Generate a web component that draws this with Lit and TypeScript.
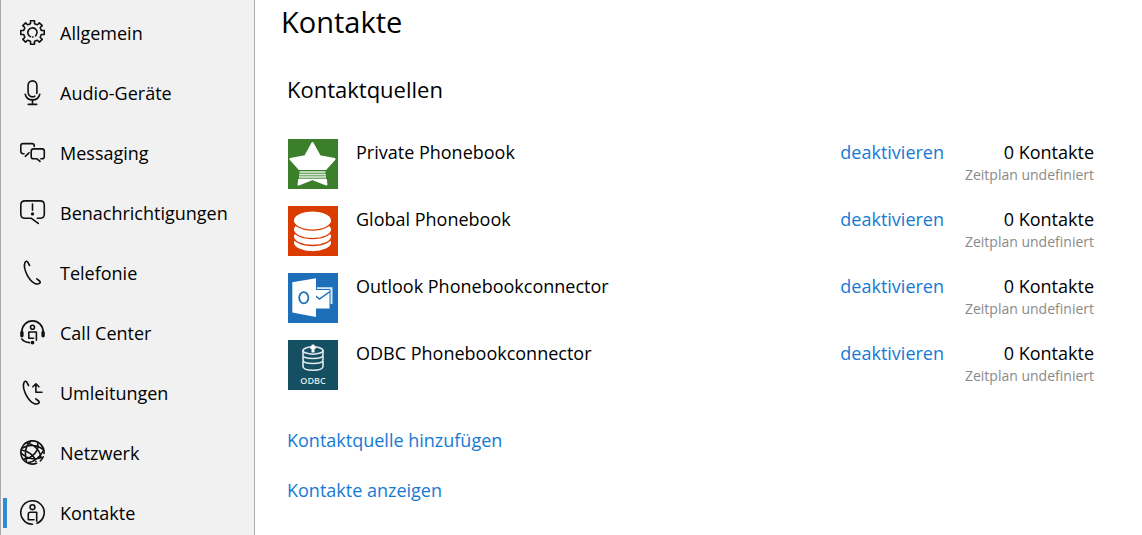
import { LitElement, html, svg, css } from "lit";
import { customElement, property } from "lit/decorators.js";

function gearPath(cx: number, cy: number): string {
  const points: string[] = [];
  const profile: [number, number][] = [
    [-9.5, 11.9],
    [9.5, 11.9],
    [12.5, 9.2],
    [18, 8.9],
    [27, 8.9],
    [32.5, 9.2],
  ];
  for (let tooth = 0; tooth < 8; tooth++) {
    for (const [angle, radius] of profile) {
      const a = ((tooth * 45 + angle - 90) * Math.PI) / 180;
      points.push(`${(cx + radius * Math.cos(a)).toFixed(2)} ${(cy + radius * Math.sin(a)).toFixed(2)}`);
    }
  }
  return `M${points.join("L")}Z`;
}

const person = svg`
  <circle cx="12.5" cy="7.2" r="2.4"/>
  <path d="M14 19.7H8.3V14.3Q8.3 12.3 10.3 12.3H16.7V21.3"/>`;

const navIcons: Record<string, unknown> = {
  gear: svg`
    <path d=${gearPath(12.5, 12.5)}/>
    <path d="M10.4 16.6A4.6 4.6 0 1 1 15.6 15.8M12.5 17H13"/>`,
  mic: svg`
    <path d="M16.9 13.5V5.3A4.4 4.4 0 0 0 8.1 5.3V12.3A4.4 4.4 0 0 0 14.8 16.2"/>
    <path d="M5.2 14.2C7 21.8 18 21.8 19.8 14.2M12.5 20V24.2M8.3 24.4H16.7"/>`,
  chat: svg`
    <path d="M14.2 6.4V5.6Q14.2 3.6 12 3.6H3Q.8 3.6 .8 5.8V11.3Q.8 13.6 3.2 13.8H4M5.3 16.3L9 12.8"/>
    <path d="M20 21.4L17 18.8H13.6Q11.2 18.8 11.2 16.4V11.2Q11.2 8.9 13.6 8.9H22Q24.3 8.9 24.3 11.2V16.4Q24.3 18.6 22 18.8H20.8"/>`,
  alert: svg`
    <path d="M18.3 23.4L11.4 18.3H5Q.8 18.3 .8 14V5Q.8 .9 5 .9H20Q24.3 .9 24.3 5V14Q24.3 18.3 20 18.3H17.3"/>
    <path d="M12.5 4V10.2"/><circle class="solid" cx="12.5" cy="13.9" r=".8"/>`,
  phone: svg`
    <path d="M9.6 5.5L7.6 1.8Q6.4 .4 5 2.4C2.8 8 8.4 21.4 16 23.9Q18.4 24.5 20.2 22.6Q20.6 21.9 19.6 21L16.8 18.8"/>`,
  headset: svg`
    <path d="M1.8 12C1.8 5.8 6.5 .9 12.5 .9S23.2 5.8 23.2 12"/>
    <path class="thick" d="M1.9 12.4V15.8M23.1 12.4V15.8"/>
    <path d="M1.8 19Q4.5 22.4 9.5 22.6"/><circle class="solid" cx="12.5" cy="22.6" r="1.1"/>
    <circle cx="12.5" cy="7.3" r="2"/><path d="M13.5 18.3H8.8V12H16.4V20.3"/>`,
  forward: svg`
    <path d="M8.6 5.5L6.6 1.8Q5.4 .4 4 2.4C1.8 8 7.4 21.4 15 23.9Q17.4 24.5 19.2 22.6Q19.6 21.9 18.6 21L15.8 18.8"/>
    <path d="M12.9 6.8L15.9 3.8L18.9 6.8M15.9 4V12.3H22"/>`,
  globe: svg`
    <path d="M16.5 23.3A11.6 11.6 0 1 1 24 13.5M23.2 16.8Q22.2 19.2 20.3 21"/>
    <path d="M7.2 3.2C13.5 4 20.3 10.5 20.8 17.5M2.6 8C8.5 4.2 17 4.6 22.8 9.2M10.7 1.2C5.5 6 4.2 13 6.5 21.5M17.5 2.2C19.8 9.5 13.5 18.2 4 19M1.4 13.2C7 19 15 19.8 21.6 17.6M2 10.2C8 10.4 14.5 15.8 16 21.5M23.4 10.8C19 18 13.5 21.8 8.5 22.6"/>`,
  contact: svg`
    <path d="M12.5 24.2A11.7 11.7 0 1 1 17 23.3"/>${person}`,
};

const tiles: Record<string, unknown> = {
  star: svg`
    <rect width="50" height="50" fill="#3b7f2b"/>
    <path d="M24.5 4L31.8 17.2L46.6 20L37 30.8L38.4 45.6L24.5 40L10.6 45.6L12 30.8L2.4 20L17.2 17.2Z"
      fill="#fff" stroke="#fff" stroke-width="2" stroke-linejoin="round"/>
    <path d="M10 31H39V40H10Z" fill="#3b7f2b"/>
    <path d="M11.5 33.2H37.5M11 38.2H38" stroke="#bcd6b7" stroke-width="2.6"/>
    <path d="M11 35.8H38" stroke="#fff" stroke-width="1.2"/>`,
  database: svg`
    <rect width="50" height="50" fill="#da3b01"/>
    <g fill="#fff" stroke="#da3b01" stroke-width="1.3">
      <ellipse cx="24.5" cy="36.8" rx="19.2" ry="9"/>
      <ellipse cx="24.5" cy="30.5" rx="19.2" ry="9"/>
      <ellipse cx="24.5" cy="23.6" rx="19.2" ry="9"/>
      <ellipse cx="24.5" cy="14.5" rx="19.2" ry="9.6"/>
    </g>`,
  outlook: svg`
    <rect width="50" height="50" fill="#1e6fb9"/>
    <path d="M29 14.2H44.5V31H29Z" fill="#d9e8f5"/>
    <path d="M27 16.5H42V36H27Z" fill="#fff" stroke="#1e6fb9"/>
    <path d="M27 22.5L31.5 26L42 18.5" fill="none" stroke="#1e6fb9" stroke-width="1.5"/>
    <path d="M4.3 9.2L28 5.2V44L4.3 39.4Z" fill="#fff"/>
    <ellipse cx="15.8" cy="24.8" rx="4.6" ry="5.6" fill="none" stroke="#1e6fb9" stroke-width="1.8"/>`,
  odbc: svg`
    <rect width="50" height="50" fill="#145062"/>
    <g fill="none" stroke="#e3eaec" stroke-width="1.6">
      <ellipse cx="25" cy="10.5" rx="10" ry="3.7"/>
      <path d="M15 10.5V15C15 19.6 35 19.6 35 15V10.5M15 16V20C15 24.6 35 24.6 35 20V16M15 21V26.3C15 31.6 35 31.6 35 26.3V21"/>
    </g>
    <path d="M25 4.6V12.5" stroke="#fff" stroke-width="3"/>
    <path d="M22.2 7.8H27.8" stroke="#fff" stroke-width="2"/>
    <text x="25" y="44" text-anchor="middle" fill="#dfe7ea" font-size="9" font-weight="600">ODBC</text>`,
};

@customElement("nav-entry")
export class NavEntry extends LitElement {
  @property() label = "";
  @property() icon = "";
  @property({ type: Boolean }) active = false;

  static styles = css`
    :host {
      display: block;
    }
    .link {
      display: flex;
      align-items: center;
      gap: 14px;
      height: 30px;
      padding-left: 13px;
      border-left: 4px solid transparent;
      margin-left: 2px;
      color: #000;
      font-size: 18px;
      text-decoration: none;
      white-space: nowrap;
    }
    .link.active {
      border-left-color: #2b8fd0;
    }
    .icon {
      flex: none;
      width: 26px;
      height: 26px;
      fill: none;
      stroke: #111;
      stroke-width: 1.6;
      stroke-linecap: round;
      stroke-linejoin: round;
    }
    .solid {
      fill: #111;
    }
    .thick {
      stroke-width: 3.4;
    }
  `;

  render() {
    return html`<a
      class="link ${this.active ? "active" : ""}"
      href="#${this.icon}"
      aria-current=${this.active ? "page" : "false"}
      ><svg class="icon" viewBox="0 0 26 26" aria-hidden="true">${navIcons[this.icon]}</svg
      ><span>${this.label}</span></a
    >`;
  }
}

@customElement("source-row")
export class SourceRow extends LitElement {
  @property() name = "";
  @property() icon = "";
  @property({ type: Number }) count = 0;

  static styles = css`
    :host {
      display: grid;
      grid-template-columns: 50px 1fr auto 132px;
      column-gap: 18px;
      align-items: start;
      font-size: 18px;
      line-height: 26px;
    }
    .tile {
      display: block;
      width: 50px;
      height: 50px;
    }
    .toggle {
      padding: 0;
      border: 0;
      background: none;
      color: #1579d6;
      font: inherit;
      cursor: pointer;
    }
    .stats {
      text-align: right;
      white-space: nowrap;
    }
    .schedule {
      color: #8a8a8a;
      font-size: 14px;
      line-height: 20px;
    }
  `;

  render() {
    return html`
      <svg class="tile" viewBox="0 0 50 50" aria-hidden="true">${tiles[this.icon]}</svg>
      <span>${this.name}</span>
      <button class="toggle" type="button">deaktivieren</button>
      <div class="stats">
        <div>${this.count} Kontakte</div>
        <div class="schedule">Zeitplan undefiniert</div>
      </div>
    `;
  }
}

@customElement("app-root")
export class AppRoot extends LitElement {
  private entries = [
    { label: "Allgemein", icon: "gear" },
    { label: "Audio-Geräte", icon: "mic" },
    { label: "Messaging", icon: "chat" },
    { label: "Benachrichtigungen", icon: "alert" },
    { label: "Telefonie", icon: "phone" },
    { label: "Call Center", icon: "headset" },
    { label: "Umleitungen", icon: "forward" },
    { label: "Netzwerk", icon: "globe" },
    { label: "Kontakte", icon: "contact" },
  ];

  private sources = [
    { name: "Private Phonebook", icon: "star", count: 0 },
    { name: "Global Phonebook", icon: "database", count: 0 },
    { name: "Outlook Phonebookconnector", icon: "outlook", count: 0 },
    { name: "ODBC Phonebookconnector", icon: "odbc", count: 0 },
  ];

  static styles = css`
    :host {
      display: grid;
      grid-template-columns: 255px 1fr;
      min-height: 100vh;
      background: #fff;
      color: #000;
      font-family: "Segoe UI", "Open Sans", "Noto Sans", sans-serif;
    }
    .sidebar {
      box-sizing: border-box;
      display: flex;
      flex-direction: column;
      gap: 30px;
      padding-top: 18px;
      border-left: 1px solid #a9a9af;
      border-right: 1px solid #a9a9af;
      background: #f1f1f1;
    }
    .content {
      padding: 0 48px 0 26px;
    }
    .title {
      margin: 0;
      font-size: 29px;
      line-height: 44px;
      font-weight: 400;
    }
    .section {
      padding: 28px 0 0 6px;
    }
    .subtitle {
      margin: 0;
      font-size: 22px;
      line-height: 34px;
      font-weight: 400;
    }
    .sources {
      display: grid;
      gap: 17px;
      margin: 0;
      padding: 33px 0 37px 1px;
      list-style: none;
    }
    .actions {
      display: flex;
      flex-direction: column;
      align-items: flex-start;
      gap: 24px;
    }
    .action {
      color: #1579d6;
      font-size: 18px;
      line-height: 26px;
      text-decoration: none;
    }
  `;

  render() {
    return html`
      <nav class="sidebar" aria-label="Einstellungen">
        ${this.entries.map(
          (e) =>
            html`<nav-entry .label=${e.label} .icon=${e.icon} .active=${e.icon === "contact"}></nav-entry>`
        )}
      </nav>
      <main class="content">
        <h1 class="title">Kontakte</h1>
        <section class="section">
          <h2 class="subtitle">Kontaktquellen</h2>
          <ul class="sources">
            ${this.sources.map(
              (s) =>
                html`<li><source-row .name=${s.name} .icon=${s.icon} .count=${s.count}></source-row></li>`
            )}
          </ul>
          <div class="actions">
            <a class="action" href="#add">Kontaktquelle hinzufügen</a>
            <a class="action" href="#show">Kontakte anzeigen</a>
          </div>
        </section>
      </main>
    `;
  }
}
